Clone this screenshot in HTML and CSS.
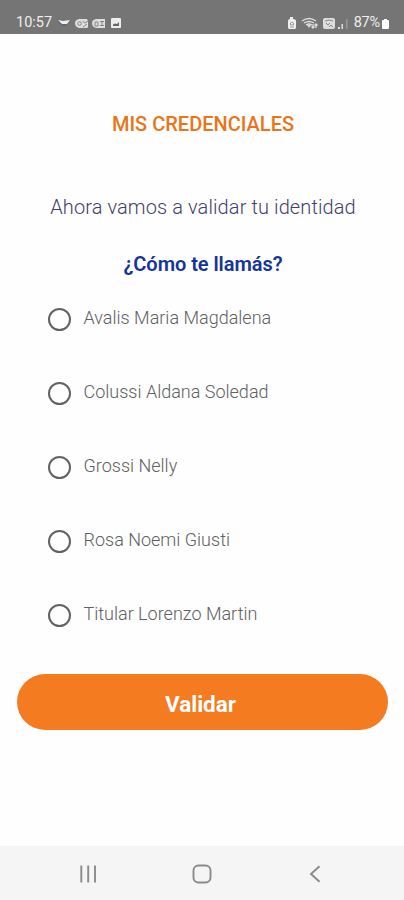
FILE: index.html
```html
<!DOCTYPE html>
<html lang="es">
<head>
<meta charset="utf-8">
<meta name="viewport" content="width=device-width, initial-scale=1">
<title>Mis credenciales</title>
<link rel="stylesheet" href="styles.css">
</head>
<body>
<header class="status">
  <span class="clock">10:57</span>
  <svg class="status-left" width="68" height="14" viewBox="0 0 68 14" aria-hidden="true">
    <path d="M1 4L6 6L13 4Q11 9 7 10Q3 9 1 4Z" fill="#606082"/>
    <path d="M1 4L6 5L13 4L10 8H5Z" fill="#eee"/>
    <g fill="#dedede">
      <path d="M22 3H29Q31 3 31 6V11Q31 12 29 12H22Q18 11 18 7Q18 4 22 3Z"/><path d="M39 3H48V12H39Q35 11 35 7Q35 4 39 3Z"/><rect x="54" y="2" width="10" height="10" rx="1" fill="#eee"/>
    </g>
    <g fill="none" stroke="#858585" stroke-width="1"><circle cx="22.500" cy="7.500" r="1.800"/><path d="M25.500 5L28 7L31 5M26 11L30 8M38 6H41V10H38ZM43 5.500H47M43 9.500H47M45 6V9"/></g>
    <path d="M56 10V8.500L58 7.500L60 8L62 6V10Z" fill="#666"/>
  </svg>
  <svg class="status-right" width="64" height="16" viewBox="0 0 64 16" aria-hidden="true">
    <path d="M3 2H6V4Q9 4 9 6V12Q9 14 8 14H2Q1 14 1 12V6Q1 4 3 4Z" fill="#eee"/>
    <path d="M3.500 10V8Q5 6 6.500 8V10ZM3 12H7" fill="none" stroke="#999"/>
    <g fill="none" stroke="#ddd" stroke-width="1.3"><path d="M15 6Q22 1 29 6M17 8Q22 5 27 8M19 10Q22 8 25 10"/><path d="M26 9V13M24.500 11.500L26 13L27.500 11.500M29 13V9M27.500 10.500L29 9L30.500 10.500"/></g>
    <path d="M20 10L22 13L24 10Z" fill="#ddd"/>
    <rect x="36" y="3" width="12" height="11" rx="2" fill="#ddd"/>
    <path d="M38 6Q42 4 46 6M39 8L41 10L43 8M42 12L44 10L46 12" fill="none" stroke="#888"/>
    <path d="M51 12H53V14H51ZM54.500 9H56V14H54.500Z" fill="#ddd"/><path d="M59 4H60.500V14H59Z" fill="#999"/>
  </svg>
  <span class="percent">87%</span>
  <svg class="battery" width="9" height="13" viewBox="0 0 9 13" aria-hidden="true"><path d="M3 2H6V3H7Q8 3 8 4V11Q8 12 7 12H2Q1 12 1 11V4Q1 3 2 3H3Z" fill="#fff"/></svg>
</header>
<main class="content">
  <h1 class="title">MIS CREDENCIALES</h1>
  <p class="intro">Ahora vamos a validar tu identidad</p>
  <h2 class="question">¿Cómo te llamás?</h2>
  <form class="form">
    <div class="options">
      <label class="option"><input class="radio" type="radio" name="persona"><span class="name">Avalis Maria Magdalena</span></label>
      <label class="option"><input class="radio" type="radio" name="persona"><span class="name">Colussi Aldana Soledad</span></label>
      <label class="option"><input class="radio" type="radio" name="persona"><span class="name">Grossi Nelly</span></label>
      <label class="option"><input class="radio" type="radio" name="persona"><span class="name">Rosa Noemi Giusti</span></label>
      <label class="option"><input class="radio" type="radio" name="persona"><span class="name">Titular Lorenzo Martin</span></label>
    </div>
    <button class="submit" type="button">Validar</button>
  </form>
</main>
<nav class="nav">
  <svg width="20" height="20" viewBox="0 0 20 20" aria-hidden="true"><path d="M2.300 1.500V18.500M9.200 1.500V18.500M16 1.500V18.500" fill="none" stroke="#8a8a8a" stroke-width="1.9"/></svg>
  <svg width="20" height="20" viewBox="0 0 20 20" aria-hidden="true"><rect x="1.500" y="1.500" width="17" height="17" rx="5" fill="none" stroke="#8a8a8a" stroke-width="1.9"/></svg>
  <svg width="20" height="20" viewBox="0 0 20 20" aria-hidden="true"><path d="M13.500 2.300L5 10L13.500 17.700" fill="none" stroke="#8a8a8a" stroke-width="1.9"/></svg>
</nav>
</body>
</html>
```
FILE: styles.css
```css
* { box-sizing: border-box; }
body {
  margin: 0;
  height: 900px;
  display: flex;
  flex-direction: column;
  background: #fefefe;
  font-family: Roboto, "Liberation Sans", sans-serif;
  overflow: hidden;
}
.status {
  height: 34px;
  flex: none;
  display: flex;
  align-items: center;
  padding: 12px 14px 0 16px;
  background: #757575;
  color: #eee;
  font-size: 14.5px;
  line-height: 20px;
}
.status-left { margin-left: 5px; }
.status-right { margin-left: auto; }
.percent { margin: 0 1px 0 3px; letter-spacing: -0.2px; }
.content {
  flex: 1;
  display: flex;
  flex-direction: column;
  text-align: center;
}
.title {
  margin: 78px 0 0 2px;
  font-size: 20px;
  line-height: 24px;
  font-weight: 500;
  color: #ea7518;
}
.intro {
  margin: 59px 0 0 2px;
  font-size: 20px;
  line-height: 24px;
  font-weight: 300;
  letter-spacing: 0.1px;
  color: #3f3f6c;
}
.question {
  margin: 33px 0 0 2px;
  font-size: 20px;
  line-height: 24px;
  font-weight: 600;
  letter-spacing: -0.05px;
  color: #13349a;
}
.form { margin: 6px 16px 0 17px; }
.options { padding-left: 30.5px; }
.option {
  height: 74.2px;
  display: flex;
  align-items: center;
}
.radio {
  appearance: none;
  width: 23px;
  height: 23px;
  margin: 0 13px 0 0;
  border: 2px solid #626262;
  border-radius: 50%;
}
.name {
  padding-bottom: 3px;
  font-size: 18px;
  line-height: 22px;
  font-weight: 300;
  color: #606060;
}
.submit {
  width: 100%;
  height: 56px;
  margin: 21.5px 0 0;
  padding: 4px 4px 0 0;
  border: 0;
  border-radius: 28px;
  background: #f47b20;
  color: #fff;
  font: 700 22.5px/26px Roboto, "Liberation Sans", sans-serif;
}
.nav {
  height: 54px;
  padding-top: 1px;
  flex: none;
  display: flex;
  justify-content: center;
  align-items: center;
  gap: 93.5px;
  background: #f5f5f5;
}
```
